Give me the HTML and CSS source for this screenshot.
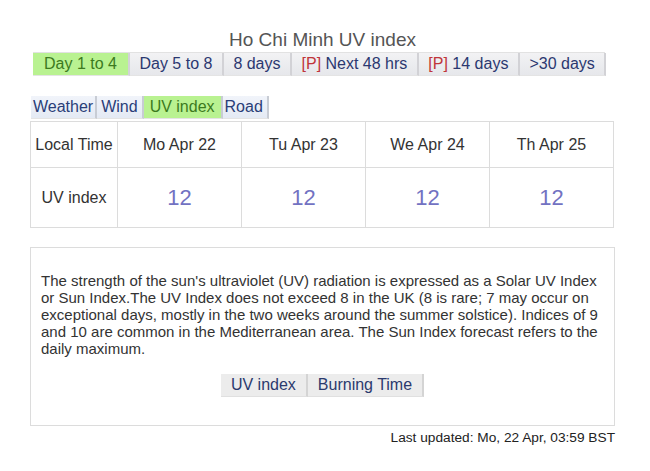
FILE: index.html
```html
<!DOCTYPE html>
<html>
<head>
<meta charset="utf-8">
<link rel="stylesheet" href="styles.css">
</head>
<body>
<div class="page">
  <h1 class="title">Ho Chi Minh UV index</h1>
  <div class="tabs main-tabs">
    <span class="tab active">Day 1 to 4</span>
    <span class="tab">Day 5 to 8</span>
    <span class="tab">8 days</span>
    <span class="tab"><span class="p">[P]</span> Next 48 hrs</span>
    <span class="tab"><span class="p">[P]</span> 14 days</span>
    <span class="tab">&gt;30 days</span>
  </div>
  <div class="tabs sub-tabs">
    <span class="stab">Weather</span>
    <span class="stab wind">Wind</span>
    <span class="stab active">UV index</span>
    <span class="stab">Road</span>
  </div>
  <table class="uv-table">
    <colgroup>
      <col class="c0"><col class="c1"><col class="c1"><col class="c1"><col class="c1">
    </colgroup>
    <tr class="head-row">
      <td>Local Time</td>
      <td>Mo Apr 22</td>
      <td>Tu Apr 23</td>
      <td>We Apr 24</td>
      <td>Th Apr 25</td>
    </tr>
    <tr class="val-row">
      <td class="label">UV index</td>
      <td class="val">12</td>
      <td class="val">12</td>
      <td class="val">12</td>
      <td class="val">12</td>
    </tr>
  </table>
  <div class="info">
    <p class="desc">The strength of the sun's ultraviolet (UV) radiation is expressed as a Solar UV Index or Sun Index.The UV Index does not exceed 8 in the UK (8 is rare; 7 may occur on exceptional days, mostly in the two weeks around the summer solstice). Indices of 9 and 10 are common in the Mediterranean area. The Sun Index forecast refers to the daily maximum.</p>
    <div class="buttons">
      <span class="btn">UV index</span><span class="btn">Burning Time</span>
    </div>
  </div>
  <div class="updated">Last updated: Mo, 22 Apr, 03:59 BST</div>
</div>
</body>
</html>
```
FILE: styles.css
```css
html, body {
  margin: 0;
  padding: 0;
  background: #fff;
}
body {
  font-family: "Liberation Sans", Arial, sans-serif;
  color: #333;
}
.page {
  width: 585px;
  margin-left: 30px;
  padding-top: 29px;
}
.title {
  margin: 0;
  font-size: 19px;
  font-weight: normal;
  line-height: 21px;
  text-align: center;
  color: #555;
}
.tabs {
  display: flex;
}
.main-tabs {
  margin-top: 2px;
  margin-left: 3px;
  width: 572px;
  border-top: 1px solid #e2e2e2;
}
.tab {
  font-size: 16px;
  line-height: 22px;
  padding: 0 9.5px;
  background: linear-gradient(#f2f2f4, #e6e7eb);
  color: #2b3870;
  border-right: 2px solid #d2d2d6;
  border-bottom: 1px solid #e4e4e4;
  white-space: nowrap;
}
.tab.active {
  background: #b9f291;
  color: #3c7a1e;
  padding: 0 11px;
}
.tab .p {
  color: #c0353a;
}
.sub-tabs {
  margin-top: 20px;
  margin-left: 1px;
}
.stab {
  font-size: 16px;
  line-height: 22px;
  padding: 0 2px;
  background: linear-gradient(#f1f4fa, #e4eaf4);
  color: #2a3e78;
  border-right: 2px solid #c8ccd4;
  border-bottom: 1px solid #e4e4e4;
}
.stab.wind {
  padding: 0 4px;
}
.stab.active {
  background: #b9f291;
  color: #3c7a1e;
  padding: 0 6px;
}
.stab:last-child {
  padding: 0 4px 0 2px;
}
.uv-table {
  margin-top: 2px;
  border-collapse: collapse;
  width: 584px;
  table-layout: fixed;
}
.uv-table .c0 { width: 87px; }
.uv-table .c1 { width: 124px; }
.uv-table td {
  border: 1px solid #dcdcdc;
  text-align: center;
  font-size: 16px;
  color: #333;
  padding: 0;
}
.head-row td { height: 45px; }
.val-row td { height: 59px; }
.val-row td.val {
  font-size: 22px;
  color: #7272c2;
}
.info {
  margin-top: 19px;
  height: 177px;
  border: 1px solid #dcdcdc;
  padding: 0 10px;
  display: flex;
  flex-direction: column;
}
.desc {
  margin: 24px 0 0 0;
  font-size: 15px;
  line-height: 17px;
  color: #333;
}
.buttons {
  margin-top: 17px;
  display: flex;
  justify-content: center;
}
.btn {
  font-size: 16px;
  line-height: 22px;
  padding: 0 10px;
  background: #ececec;
  color: #2b3a6e;
  border-right: 2px solid #d4d4d4;
  border-bottom: 1px solid #e0e0e0;
}
.updated {
  margin-top: 4px;
  text-align: right;
  font-size: 13.7px;
  line-height: 16px;
  color: #222;
}
```
